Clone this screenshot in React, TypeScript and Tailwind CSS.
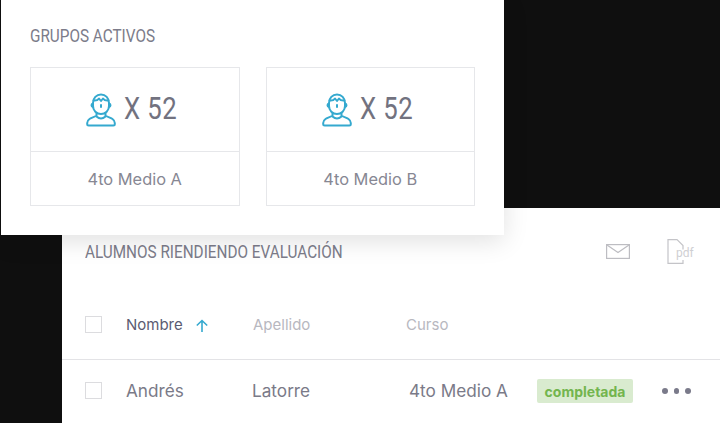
import React from 'react';

const StudentIcon = () => (
  <svg width="30" height="34" viewBox="0 0 30 34" fill="none" stroke="#35a9cf" strokeWidth="2" strokeLinecap="round" strokeLinejoin="round">
    <path d="M7 10c0-5 3.500-8.500 8-8.500s8 3.500 8 8.500v3c0 4.500-3.500 8-8 8s-8-3.500-8-8z" />
    <path d="M7.500 7.500c2.500.3 4.500-.5 5.500-2l2 2.500 2-2.500c1 1.500 3 2.300 5.500 2" />
    <path d="M7 10.500c-1 .3-1.500 1-1.500 1.800s.5 1.500 1.500 1.700M23 10.500c1 .3 1.500 1 1.500 1.800s-.5 1.500-1.500 1.700" />
    <path d="M15 12v2" />
    <path d="M10.500 20v2.500c-2 1.500-5.500 2.500-7 3.500-1.500 1-2.300 2.300-2.300 4v1a1.500 1.500 0 001.500 1.500h24.600a1.500 1.500 0 001.500-1.500v-1c0-1.700-.8-3-2.300-4-1.500-1-5-2-7-3.500V20" />
    <path d="M10.500 23.500c1.500 1.300 3 2 4.500 2s3-.7 4.500-2" />
  </svg>
);

const GroupCard = ({ name }: { name: string }) => (
  <div className="w-[210px] h-[139px] border border-[#e6e7ea] flex flex-col">
    <div className="h-[84px] flex items-center justify-center gap-[8px] pl-[5px] border-b border-[#e6e7ea]">
      <StudentIcon />
      <span className="font-['Roboto'] text-[31px] leading-[36px] -mt-[2px] text-[#72727f] tracking-[0.5px] origin-left scale-x-[0.83]">X 52</span>
    </div>
    <div className="flex-1 flex items-center justify-center pt-[1px] font-['Inter'] text-[16.4px] text-[#878793]">{name}</div>
  </div>
);

const Checkbox = () => <div className="w-[17px] h-[17px] -mt-[2px] border border-[#dcdcdf] shrink-0" />;

export default function App() {
  return (
    <div className="relative w-[720px] h-[423px] overflow-hidden bg-[#0f0f0f] pt-[208px] pl-[62px]">
      {/* tabla */}
      <div className="bg-white h-[215px] font-['Inter']">
        <div className="h-[94px] pl-[23px] pr-[27px] flex items-start justify-between pt-[33px]">
          <span className="font-['Roboto'] text-[18px] leading-[22px] text-[#7c7c8a] origin-left scale-x-[0.85] whitespace-nowrap">ALUMNOS RIENDIENDO EVALUACIÓN</span>
          <div className="flex items-start gap-[38px]">
            <svg width="24" height="15" viewBox="0 0 24 15" fill="none" stroke="#bdbdc2" strokeWidth="1.2" className="mt-[3px] -mr-[1px]">
              <rect x="0.6" y="0.6" width="22.8" height="13.8" />
              <path d="M1 1l11 7.500L23 1" />
            </svg>
            <div className="relative w-[26px] h-[25px] -mt-[2px]">
              <svg width="20" height="25" viewBox="0 0 20 25" fill="none" stroke="#c4c4c8" strokeWidth="1.2">
                <path d="M16 21v3.400H1V.6h9L16 6.500v4" />
              </svg>
              <span className="absolute left-[9px] top-[7px] text-[12px] leading-[14px] text-[#cfcfd3] font-['Roboto']">pdf</span>
            </div>
          </div>
        </div>
        <div className="h-[58px] pl-[23px] flex items-center border-b border-[#e3e3e6] pb-[10px] text-[15px]">
          <Checkbox />
          <span className="ml-[24px] w-[69px] text-[#5b5b72]">Nombre</span>
          <svg width="14" height="14" viewBox="0 0 14 14" fill="none" stroke="#35a9cf" strokeWidth="1.6">
            <path d="M7 13V1.500M1.800 6.500L7 1.500l5.200 5" />
          </svg>
          <span className="ml-[44px] w-[153px] text-[#b8b8bf]">Apellido</span>
          <span className="text-[#b8b8bf]">Curso</span>
        </div>
        <div className="h-[62px] pl-[23px] flex items-center text-[17.200px] text-[#7a7a88]">
          <Checkbox />
          <span className="ml-[24px] w-[126px]">Andrés</span>
          <span className="w-[157px]">Latorre</span>
          <span className="w-[128px]">4to Medio A</span>
          <span className="w-[96px] h-[24px] flex items-center justify-center rounded-[2px] bg-[#d9ebcf] text-[14px] font-bold text-[#73b54e]">completada</span>
          <div className="ml-[29px] flex gap-[6px]">
            <span className="w-[5.500px] h-[5.500px] rounded-full bg-[#7a7a8a]" />
            <span className="w-[5.500px] h-[5.500px] rounded-full bg-[#7a7a8a]" />
            <span className="w-[5.500px] h-[5.500px] rounded-full bg-[#7a7a8a]" />
          </div>
        </div>
      </div>

      {/* panel flotante de grupos */}
      <div className="absolute left-[1px] top-0 w-[503px] h-[235px] bg-white shadow-[0_6px_24px_rgba(0,0,0,0.12)] px-[29px] pt-[25px]">
        <div className="font-['Roboto'] text-[18px] leading-[22px] text-[#7c7c8a] origin-left scale-x-[0.85] whitespace-nowrap">GRUPOS ACTIVOS</div>
        <div className="mt-[20px] flex gap-[26px]">
          <GroupCard name="4to Medio A" />
          <GroupCard name="4to Medio B" />
        </div>
      </div>
    </div>
  );
}
